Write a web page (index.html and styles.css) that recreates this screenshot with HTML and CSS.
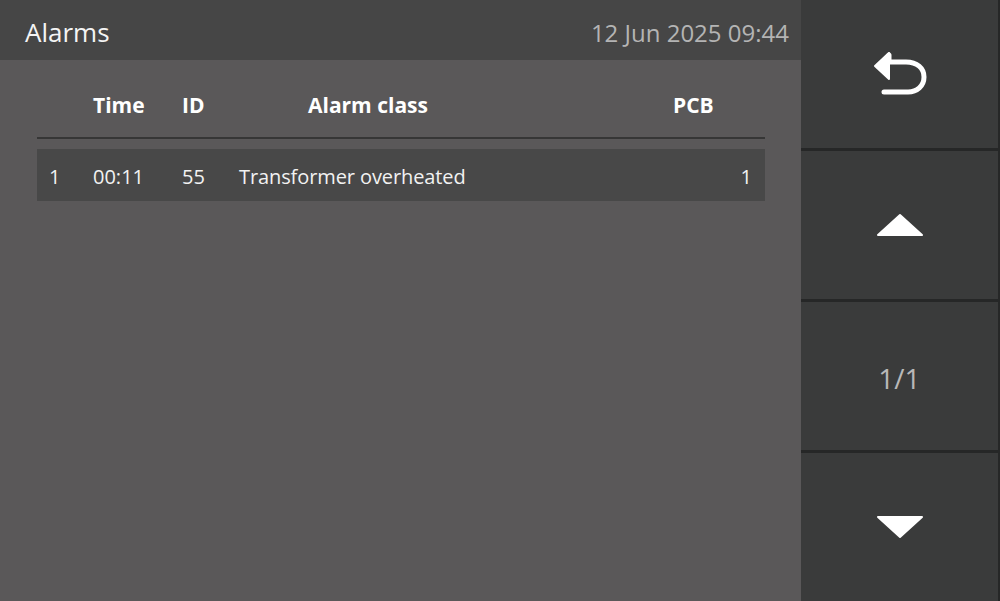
FILE: index.html
```html
<!DOCTYPE html>
<html lang="en">
<head>
  <meta charset="UTF-8">
  <title>Alarms</title>
  <link rel="stylesheet" href="styles.css">
</head>
<body>
  <div class="screen">
    <div class="main">
      <div class="topbar">
        <span class="title">Alarms</span>
        <span class="clock">12 Jun 2025 09:44</span>
      </div>
      <div class="table">
        <div class="head">
          <span class="c-no"></span>
          <span class="c-time">Time</span>
          <span class="c-id">ID</span>
          <span class="c-class">Alarm class</span>
          <span class="c-pcb">PCB</span>
        </div>
        <div class="row">
          <span class="c-no">1</span>
          <span class="c-time">00:11</span>
          <span class="c-id">55</span>
          <span class="c-class">Transformer overheated</span>
          <span class="c-pcb">1</span>
        </div>
      </div>
    </div>
    <div class="side">
      <div class="btn">
        <svg width="56" height="46" viewBox="0 0 56 46">
          <path d="M6 15 L17 4 L17 11 L34 11 C45 11 52 17 52 26 C52 35 45 41 36 41 L12 41" fill="none" stroke="#fff" stroke-width="5" stroke-linejoin="round" stroke-linecap="round"/>
          <path d="M3 15 L17 2 L17 28 Z" fill="#fff" stroke="#fff" stroke-width="2" stroke-linejoin="round"/>
        </svg>
      </div>
      <div class="btn">
        <svg width="48" height="24" viewBox="0 0 48 24"><path d="M24 2 L46 22 L2 22 Z" fill="#fff" stroke="#fff" stroke-width="2" stroke-linejoin="round"/></svg>
      </div>
      <div class="btn page">1/1</div>
      <div class="btn">
        <svg width="48" height="24" viewBox="0 0 48 24"><path d="M2 2 L46 2 L24 22 Z" fill="#fff" stroke="#fff" stroke-width="2" stroke-linejoin="round"/></svg>
      </div>
    </div>
  </div>
</body>
</html>
```

FILE: styles.css
```css
body {
  margin: 0;
  font-family: "Open Sans", "Noto Sans", sans-serif;
  background: #5a5859;
}

.screen {
  display: flex;
  width: 1000px;
  height: 601px;
  overflow: hidden;
}

.main {
  width: 801px;
  background: #5a5859;
  display: flex;
  flex-direction: column;
}

.topbar {
  height: 60px;
  background: #464646;
  display: flex;
  align-items: center;
  justify-content: space-between;
  padding: 4px 12px 0 25px;
  box-sizing: border-box;
}

.title {
  color: #f4f4f4;
  font-size: 26px;
}

.clock {
  color: #b4b4b4;
  font-size: 24px;
}

.table {
  margin: 0 36px 0 37px;
}

.head,
.row {
  display: flex;
  align-items: center;
  font-size: 20px;
}

.head {
  height: 79px;
  padding-top: 12px;
  box-sizing: border-box;
  color: #fff;
  font-weight: 700;
  font-size: 21px;
  border-bottom: 2px solid #363636;
  margin-bottom: 10px;
}

.row {
  height: 52px;
  background: #484848;
  color: #f2f2f2;
  padding-top: 2px;
  box-sizing: border-box;
}

.c-no { width: 56px; padding-left: 12px; box-sizing: border-box; }
.c-time { width: 89px; }
.c-id { width: 57px; }
.c-class { width: 350px; letter-spacing: -0.1px; }
.head .c-class { padding-left: 69px; box-sizing: border-box; letter-spacing: 0; }
.c-pcb { flex: 1; }
.head .c-pcb { padding-left: 84px; }
.row .c-pcb { text-align: right; padding-right: 13px; }

.side {
  width: 199px;
  background: #262727;
  display: flex;
  flex-direction: column;
  gap: 3px;
  padding-right: 2px;
  box-sizing: border-box;
}

.btn {
  height: 148px;
  background: #3a3b3b;
  display: flex;
  align-items: center;
  justify-content: center;
}

.btn:last-child {
  flex: 1;
}

.page {
  color: #b8b8b8;
  font-size: 28px;
  padding-top: 4px;
  box-sizing: border-box;
}
```
